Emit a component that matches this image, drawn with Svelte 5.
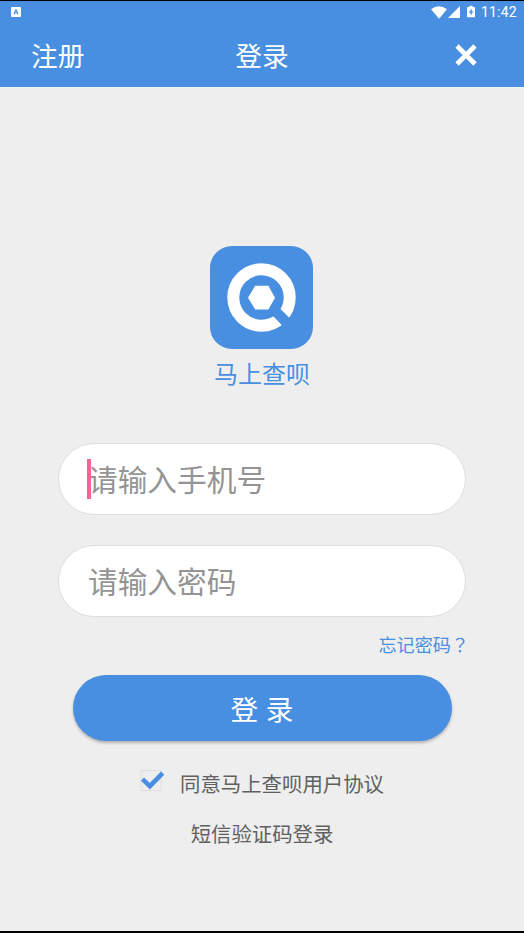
<script>
    let phone = '';
    let password = '';
    let agreed = true;
</script>

<div class="screen">
    <header>
        <div class="status-bar">
            <svg class="app-badge" viewBox="0 0 10 10">
                <rect width="10" height="10" rx="1" fill="#fff" />
                <path d="M3 7.4 4.7 2.8h.6L7 7.4M3.6 6h2.8" fill="none" stroke="#488fe1" stroke-width="1.1" />
            </svg>
            <div class="indicators">
                <svg class="wifi" viewBox="0 0 16 13">
                    <path d="M0 3.2Q8-2.8 16 3.2L8 12.8Z" fill="#fff" />
                </svg>
                <svg class="signal" viewBox="0 0 12 12">
                    <path d="M12 0v12H0Z" fill="#fff" />
                </svg>
                <svg class="battery" viewBox="0 0 9 13">
                    <path d="M2.7 0h3.6v1.3H8q1 0 1 1V12q0 1-1 1H1q-1 0-1-1V2.3q0-1 1-1h1.7Z" fill="#fff" />
                    <path d="M5.3 3.2 2 7.8h2.1v3.4L7.1 6.6H5.3Z" fill="#488fe1" />
                </svg>
                <span class="clock">11:42</span>
            </div>
        </div>
        <nav>
            <button class="register">注册</button>
            <h1>登录</h1>
            <button class="close" aria-label="关闭">
                <svg viewBox="0 0 22 22">
                    <path d="M2 2l18 18M20 2L2 20" stroke="#fff" stroke-width="4.6" />
                </svg>
            </button>
        </nav>
    </header>

    <main>
        <svg class="logo" viewBox="0 0 103 103">
            <rect width="103" height="103" rx="22" fill="#488fe1" />
            <circle cx="51.5" cy="51.5" r="28.2" fill="none" stroke="#fff" stroke-width="12" />
            <path d="M61.5 68.5 69 61.5 90 82.5 82.5 90Z" fill="#488fe1" />
            <path d="M45.2 39.8h13.2l6.6 11.9-6.6 11.9H45.2L38 51.7Z" fill="#fff" />
        </svg>
        <div class="brand">马上查呗</div>

        <form on:submit|preventDefault>
            <div class="field">
                <input type="tel" bind:value={phone} placeholder="请输入手机号" />
                <span class="cursor"></span>
            </div>
            <div class="field">
                <input type="password" bind:value={password} placeholder="请输入密码" />
            </div>
            <a class="forgot" href="#forgot">忘记密码<span class="mark" lang="zh-TW">？</span></a>
            <button class="submit" type="submit">登 录</button>
        </form>

        <label class="agreement">
            <input type="checkbox" bind:checked={agreed} />
            <svg class="checkbox" viewBox="0 0 24 24">
                <rect x="1" y="2.5" width="20" height="20" fill="none" stroke="#dedede" />
                {#if agreed}
                    <path d="M2.5 11.2 9.9 18.2 22.6 5.2" fill="none" stroke="#488fe1" stroke-width="4.6" />
                {/if}
            </svg>
            <span>同意马上查呗用户协议</span>
        </label>
        <a class="sms" href="#sms">短信验证码登录</a>
    </main>
</div>

<style>
    :global(body) {
        margin: 0;
        background: #eee;
    }

    .screen {
        box-sizing: border-box;
        width: 524px;
        height: 933px;
        display: flex;
        flex-direction: column;
        overflow: hidden;
        border-top: 1px solid #000;
        border-bottom: 2px solid #000;
        background: #eee;
        font-family: "Noto Sans CJK SC", sans-serif;
    }

    svg {
        display: block;
        flex-shrink: 0;
    }

    button {
        padding: 0;
        border: none;
        background: none;
        color: #fff;
        font-family: inherit;
        cursor: pointer;
    }

    a {
        text-decoration: none;
    }

    header {
        height: 86px;
        flex-shrink: 0;
        background: #488fe1;
        color: #fff;
    }

    .status-bar {
        height: 23px;
        padding: 0 7px 0 11px;
        display: flex;
        align-items: center;
        justify-content: space-between;
    }

    .app-badge {
        width: 10px;
        height: 10px;
        margin-bottom: 1px;
    }

    .indicators {
        display: flex;
        align-items: center;
    }

    .wifi {
        width: 16px;
        height: 13px;
        margin-bottom: 1px;
    }

    .signal {
        width: 12px;
        height: 12px;
        margin: 0 0 1px 1px;
    }

    .battery {
        width: 8px;
        height: 13px;
        margin: 0 6px 2px 7px;
    }

    .clock {
        font: 400 14px/23px Roboto, sans-serif;
        letter-spacing: 0.25px;
    }

    nav {
        height: 61px;
        padding: 0 47px 0 31px;
        display: grid;
        grid-template-columns: 1fr auto 1fr;
        align-items: center;
    }

    .register,
    h1 {
        margin: 0;
        font-size: 26.7px;
        font-weight: 400;
        line-height: 61px;
    }

    .register {
        justify-self: start;
    }

    h1 {
        padding-left: 16px;
    }

    .close {
        justify-self: end;
    }

    .close svg {
        width: 22px;
        height: 22px;
    }

    main {
        flex: 1;
        padding: 159px 58px 0;
        display: flex;
        flex-direction: column;
        align-items: center;
    }

    .logo {
        width: 103px;
        height: 103px;
        margin-right: 1px;
    }

    .brand {
        margin-top: 6px;
        font-size: 24px;
        line-height: 36px;
        color: #488fe1;
    }

    form {
        width: 100%;
        margin-top: 52px;
        display: flex;
        flex-direction: column;
        align-items: center;
    }

    .field {
        position: relative;
        box-sizing: border-box;
        width: 408px;
        height: 72px;
        border: 1.5px solid #dedede;
        border-radius: 36px;
        background: #fff;
    }

    .field + .field {
        margin-top: 30px;
    }

    .field input {
        box-sizing: border-box;
        width: 100%;
        height: 100%;
        padding: 0 29px 1px;
        border: none;
        outline: none;
        background: none;
        font-family: inherit;
        font-size: 29.7px;
        color: #333;
    }

    .field input::placeholder {
        color: #949494;
        opacity: 1;
    }

    .cursor {
        position: absolute;
        left: 28px;
        top: 15px;
        width: 4px;
        height: 40px;
        background: #ff6097;
    }

    .forgot {
        align-self: flex-end;
        margin: 14px -3px 0 0;
        font-size: 18.1px;
        line-height: 27px;
        color: #488fe1;
    }

    .mark {
        font-family: "Noto Sans CJK TC", sans-serif;
    }

    .submit {
        width: 379px;
        height: 66px;
        margin: 17px 0 0;
        border-radius: 33px;
        background: #488fe1;
        box-shadow: 0 2px 3px rgba(0, 0, 0, 0.25);
        font-size: 27.7px;
        line-height: 65px;
        word-spacing: 1.5px;
    }

    .agreement {
        margin-top: 26px;
        display: flex;
        align-items: center;
        font-size: 20.4px;
        line-height: 32px;
        color: #606060;
    }

    .agreement input {
        display: none;
    }

    .checkbox {
        width: 24px;
        height: 24px;
        margin: 0 16px 6px 0;
    }

    .sms {
        margin-top: 18px;
        font-size: 20.4px;
        line-height: 32px;
        color: #606060;
    }
</style>
